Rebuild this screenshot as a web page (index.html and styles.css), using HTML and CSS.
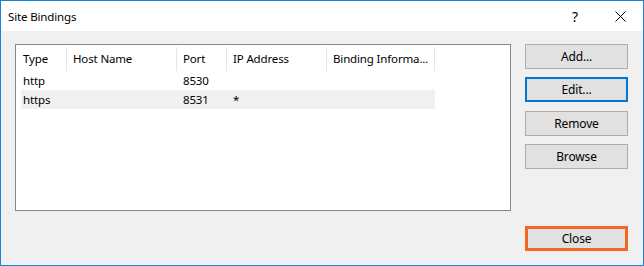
FILE: index.html
```html
<!DOCTYPE html>
<html lang="en">
<head>
    <meta charset="UTF-8">
    <title>Site Bindings</title>
    <link rel="stylesheet" href="styles.css">
</head>
<body>
    <div class="window">
        <div class="titlebar">
            <span class="title">Site Bindings</span>
            <span class="help">?</span>
            <span class="close-x">
                <svg width="11" height="11" viewBox="0 0 11 11"><path d="M0.5 0.5 L10.5 10.5 M10.5 0.5 L0.5 10.5" stroke="#000" stroke-width="1" fill="none"/></svg>
            </span>
        </div>
        <div class="content">
            <div class="listbox">
                <div class="list-head">
                    <div class="col c-type">Type</div>
                    <div class="col c-host">Host Name</div>
                    <div class="col c-port">Port</div>
                    <div class="col c-ip">IP Address</div>
                    <div class="col c-info">Binding Informa...</div>
                </div>
                <div class="list-row">
                    <div class="cell c-type">http</div>
                    <div class="cell c-host"></div>
                    <div class="cell c-port">8530</div>
                    <div class="cell c-ip"></div>
                    <div class="cell c-info"></div>
                </div>
                <div class="list-row hot">
                    <div class="cell c-type">https</div>
                    <div class="cell c-host"></div>
                    <div class="cell c-port">8531</div>
                    <div class="cell c-ip">*</div>
                    <div class="cell c-info"></div>
                </div>
            </div>
            <div class="buttons">
                <button class="btn">Add...</button>
                <button class="btn focused">Edit...</button>
                <button class="btn btn-remove">Remove</button>
                <button class="btn">Browse</button>
                <button class="btn btn-close">Close</button>
            </div>
        </div>
    </div>
</body>
</html>
```

FILE: styles.css
```css
body {
    margin: 0;
    font-family: "Noto Sans", "Open Sans", sans-serif;
    font-size: 11.5px;
    letter-spacing: -0.15px;
    color: #000;
}
.window {
    width: 644px;
    height: 266px;
    box-sizing: border-box;
    border: 1px solid #1883d7;
    display: flex;
    flex-direction: column;
    background: #f0f0f0;
}
.titlebar {
    height: 30px;
    background: #fff;
    display: flex;
    align-items: center;
    padding-left: 7px;
}
.title {
    flex: 1;
}
.help {
    font-size: 14px;
    margin-right: 37px;
}
.close-x {
    display: flex;
    margin-right: 17px;
}
.content {
    flex: 1;
    display: flex;
    gap: 14px;
    padding: 13px 15px 14px 14px;
}
.listbox {
    width: 496px;
    height: 167px;
    box-sizing: border-box;
    border: 1px solid #828790;
    background: #fff;
}
.list-head {
    display: flex;
    padding-top: 2px;
}
.col {
    height: 24px;
    line-height: 24px;
    padding-left: 6px;
    box-sizing: border-box;
    border-right: 1px solid #e5e5e5;
    white-space: nowrap;
}
.list-head .c-type {
    width: 51px;
    padding-left: 7px;
}
.c-host { width: 110px; }
.c-port { width: 50px; }
.c-ip { width: 100px; }
.c-info { width: 108px; }
.list-row {
    display: flex;
    margin-left: 5px;
    width: 414px;
    height: 19px;
    line-height: 19px;
}
.list-row.hot {
    background: #f0f0f0;
}
.cell {
    box-sizing: border-box;
    padding-left: 6px;
}
.list-row .c-type {
    width: 46px;
    padding-left: 2px;
}
.buttons {
    display: flex;
    flex-direction: column;
    gap: 8px;
    width: 103px;
}
.btn {
    height: 25px;
    box-sizing: border-box;
    background: #e1e1e1;
    border: 1px solid #adadad;
    font-family: inherit;
    font-size: 12px;
    letter-spacing: inherit;
    color: #000;
    padding: 0;
}
.btn.focused {
    border: 2px solid #0078d7;
}
.btn-remove {
    margin-top: 1px;
}
.btn-close {
    margin-top: auto;
    border: 3px solid #f26722;
}
```
